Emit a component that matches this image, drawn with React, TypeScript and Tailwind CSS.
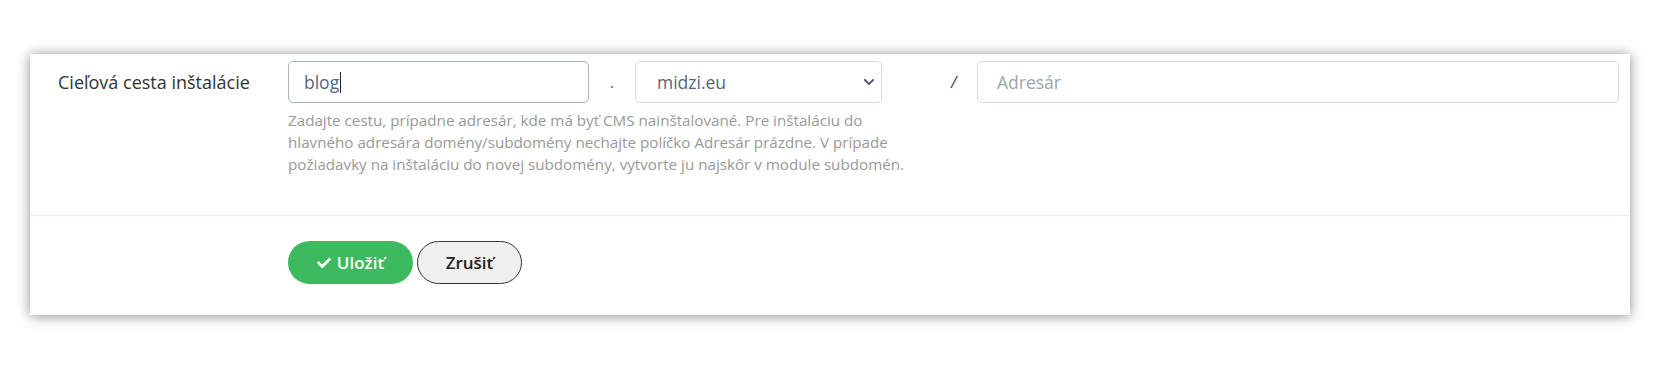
import React from "react";
import { FaCheck, FaChevronDown } from "react-icons/fa";

const font = { fontFamily: '"Open Sans", "Liberation Sans", sans-serif' };

const InstallPathForm = () => {
  return (
    <div className="min-h-[370px] w-[1660px] bg-white pl-[30px] pt-[54px]" style={font}>
      <div className="w-[1600px] bg-white shadow-[0_1px_12px_rgba(0,0,0,0.45)]">
        <div className="flex pb-[40px] pt-[7px]">
          <div className="flex h-[42px] w-[258px] shrink-0 items-center pl-[28px] text-[18px] text-[#333]">
            Cieľová cesta inštalácie
          </div>
          <div className="flex-1">
            <div className="flex items-center">
              <div className="flex h-[42px] w-[301px] items-center rounded-[5px] border border-[#a7b2c4] bg-white pl-[15px] text-[17.5px] text-[#55657f]">
                blog
                <span className="ml-[1px] h-[21px] w-[1px] bg-[#222]" />
              </div>
              <span className="w-[46px] text-center text-[16px] text-[#666]">.</span>
              <div className="flex h-[42px] w-[247px] items-center justify-between rounded-[5px] border border-[#d6dce5] bg-white pl-[21px] pr-[6px] text-[17.5px] text-[#55657f]">
                <span>midzi.eu</span>
                <FaChevronDown className="h-[12px] w-[12px] text-[#4c5a70]" />
              </div>
              <span className="w-[95px] pl-[69px] text-[16px] italic text-[#444]">/</span>
              <div className="mr-[11px] flex h-[42px] flex-1 items-center rounded-[5px] border border-[#d6dce5] bg-white pl-[19px] text-[17.5px] text-[#9aa3ae]">
                Adresár
              </div>
            </div>
            <p className="mt-[6px] text-[15.2px] leading-[22px] text-[#999]">
              Zadajte cestu, prípadne adresár, kde má byť CMS nainštalované. Pre inštaláciu do
              <br />
              hlavného adresára domény/subdomény nechajte políčko Adresár prázdne. V prípade
              <br />
              požiadavky na inštaláciu do novej subdomény, vytvorte ju najskôr v module subdomén.
            </p>
          </div>
        </div>
        <div className="flex gap-[4px] border-t border-[#e8eef4] pb-[31px] pl-[258px] pt-[25px]">
          <button className="flex h-[43px] w-[125px] items-center justify-center gap-[6px] rounded-full bg-[#3dba5f] text-[17px] font-semibold text-white">
            <FaCheck className="h-[14px] w-[14px]" />
            Uložiť
          </button>
          <button className="flex h-[43px] w-[105px] items-center justify-center rounded-full border border-[#333] bg-[#efefef] text-[17px] font-semibold text-[#222]">
            Zrušiť
          </button>
        </div>
      </div>
    </div>
  );
};

export default function App() {
  return <InstallPathForm />;
}
